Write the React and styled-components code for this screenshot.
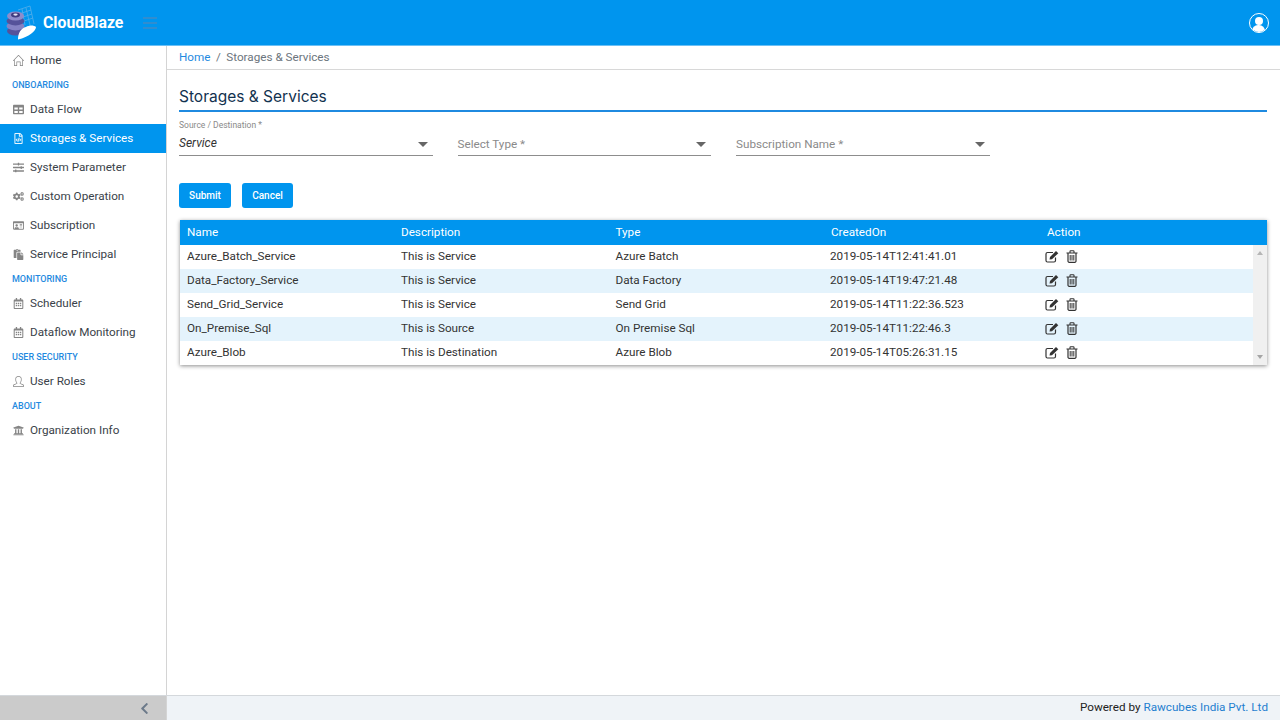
import React from 'react';
import styled, { createGlobalStyle } from 'styled-components';
import { FaTable, FaCogs, FaRegIdCard, FaPaste, FaRegCalendarAlt, FaUniversity, FaChevronLeft, FaRegFileCode, FaSlidersH } from 'react-icons/fa';
import { SlHome, SlUser } from 'react-icons/sl';

const Global = createGlobalStyle`
  html, body { margin: 0; padding: 0; height: 100%; background: #fff; }
  body { font-family: Roboto, "Liberation Sans", sans-serif; overflow: hidden; }
  * { box-sizing: border-box; }
`;

const Page = styled.div`width: 1280px; height: 720px; display: flex; flex-direction: column;`;
const Header = styled.header`
  height: 46px; flex: none; background: #0095ee; border-bottom: 1px solid #6cc0f5; display: flex; align-items: center; padding: 0 11px 0 0;
`;
const Brand = styled.div`
  font-family: Roboto, sans-serif; font-weight: 700; font-size: 15.8px; color: #fff; margin-left: 3px; width: 100px;
`;
const Burger = styled.div`
  width: 14px; height: 12px; display: flex; flex-direction: column; justify-content: space-between;
  span { display: block; height: 2px; background: #2f8dd0; }
`;
const Spacer = styled.div`flex: 1;`;
const Body = styled.div`flex: 1; display: flex; min-height: 0;`;
const Sidebar = styled.nav`
  width: 167px; flex: none; border-right: 1px solid #d4d4d4; background: #fff;
`;
const Item = styled.div`
  height: 29px; display: flex; align-items: center; padding: 0 0 1px 13px; font-size: 11.7px;
  background: ${p => (p.$active ? '#0095ee' : 'transparent')};
  color: ${p => (p.$active ? '#fff' : '#3a4249')};
  svg { width: 11px; height: 11px; color: ${p => (p.$active ? '#e6f4fd' : '#858585')}; flex: none; margin-right: 6px; }
`;
const Section = styled.div`
  height: 20px; display: flex; align-items: center; padding: 0 0 1px 12px; font-size: 9px; font-weight: 500; color: #1f8ae0;
`;
const Main = styled.main`flex: 1; display: flex; flex-direction: column; min-width: 0;`;
const Crumbs = styled.div`
  height: 24px; flex: none; border-bottom: 1px solid #d8d8d8; padding: 0 0 2px 12px; display: flex; align-items: center;
  font-size: 11.7px; color: #6c757d; gap: 5.5px;
  a { color: #1f8ae0; }
`;
const Content = styled.div`padding: 17px 13px 0 12px; flex: 1;`;
const Title = styled.h1`
  margin: 0; font-family: Inter, sans-serif; font-weight: 400; font-size: 15.5px; color: #12324f; height: 25px; line-height: 20px;
  border-bottom: 2px solid #1f8ae0;
`;
const FormRow = styled.div`display: flex; gap: 25px; margin-top: 7px;`;
const Field = styled.div`
  width: 253.5px; height: 37px; position: relative; border-bottom: 1px solid #8d8d8d; display: flex; align-items: flex-end; padding-bottom: 4px;
`;
const FloatLabel = styled.label`
  position: absolute; top: 1px; left: 0; font-size: 8.5px; color: #8a8a8a;
`;
const Value = styled.span`font-size: 12px; font-style: italic; color: #333; position: relative; top: -1.5px;`;
const Placeholder = styled.span`font-size: 11.7px; color: #8a8a8a;`;
const Caret = styled.i`
  position: absolute; right: 5px; bottom: 8px; width: 0; height: 0;
  border-left: 5px solid transparent; border-right: 5px solid transparent; border-top: 5px solid #666;
`;
const Buttons = styled.div`display: flex; gap: 11px; margin-top: 27px;`;
const Button = styled.button`
  width: ${p => p.$w}px; height: 25px; border: 0; border-radius: 3px; background: #0095ee; color: #fff;
  font-family: Roboto, sans-serif; font-size: 10px; font-weight: 500; padding: 0;
`;
const Table = styled.div`
  margin-top: 12px; margin-left: 1px; box-shadow: 0 1px 4px rgba(0,0,0,.45); position: relative;
`;
const cols = '214px 214.5px 215.5px 216px 1fr';
const HeadRow = styled.div`
  display: grid; grid-template-columns: ${cols}; height: 25px; padding: 0 0 1px 7px; background: #0095ee; color: #fff; font-size: 11.7px; align-items: center;
`;
const RowsWrap = styled.div`position: relative;`;
const Row = styled.div`
  display: grid; grid-template-columns: ${cols}; height: 24px; align-items: center; padding: 0 0 2px 7px; font-size: 11.7px; color: #333;
  background: ${p => (p.$alt ? '#e4f3fc' : '#fff')};
`;
const Cell = styled.div`margin-left: ${p => p.$shift || 0}px;`;
const Actions = styled.div`display: flex; gap: 7px; align-items: center; margin: 0 0 0 -2px; color: #333;`;
const Scrollbar = styled.div`
  position: absolute; right: 0; top: 0; bottom: 0; width: 14px; background: #f0f0f0;
  &::before, &::after { content: ''; position: absolute; left: 3.5px; border-left: 3.5px solid transparent; border-right: 3.5px solid transparent; }
  &::before { top: 6px; border-bottom: 4px solid #b5b5b5; }
  &::after { bottom: 6px; border-top: 4px solid #a5a5a5; }
`;
const Footer = styled.footer`height: 25px; flex: none; display: flex; border-top: 1px solid #d4d8dc;`;
const Collapse = styled.div`
  width: 167px; background: #cbcbcb; border-right: 1px solid #d4d4d4; display: flex; align-items: center; justify-content: flex-end; padding-right: 16px;
  color: #6c7a8a; svg { width: 11px; height: 13px; }
`;
const FootText = styled.div`
  flex: 1; background: #eff3f7; display: flex; align-items: center; justify-content: flex-end; padding: 0 12px 2px 0; font-size: 11.7px; color: #222;
  a { color: #1f7fd0; margin-left: 3px; }
`;
const Avatar = styled.div`
  width: 20px; height: 20px; border-radius: 50%; border: 1.5px solid #fff; position: relative; overflow: hidden;
  &::before { content: ''; position: absolute; left: 4.5px; top: 3px; width: 8px; height: 8px; border-radius: 50%; background: #fff; }
  &::after { content: ''; position: absolute; left: 2px; top: 11.5px; width: 13px; height: 9px; border-radius: 6px 6px 0 0; background: #fff; }
`;

const Logo = () => (
  <svg width="40" height="45" viewBox="0 0 40 45" aria-hidden="true">
    <g stroke="#56aeea" strokeWidth="0.8" fill="none">
      <path d="M18 10 L30 6 L34 24 M22 9 L25 25 M26 8 L30 25 M19 14 L31 10 M20 18 L32 14 M21 22 L33 18" />
    </g>
    <ellipse cx="15.5" cy="31" rx="8.5" ry="4.6" fill="#55529a" />
    <ellipse cx="15.5" cy="26" rx="9" ry="4.4" fill="#8582c4" />
    <ellipse cx="15.5" cy="21" rx="9" ry="4.4" fill="#55529a" />
    <ellipse cx="15.5" cy="16" rx="8.5" ry="4.6" fill="#8f8cca" />
    <ellipse cx="15.5" cy="15" rx="4.5" ry="2.4" fill="#3f3c80" />
    <ellipse cx="15.5" cy="14.6" rx="2.2" ry="1.1" fill="#e2e2f2" />
    <path d="M18 39.5 C18 33 21 28 26 27 C29 25 34 25 36 27 C36 31 29 37 18 39.5Z" fill="#fff" />
  </svg>
);

const EditIcon = () => (
  <svg width="14" height="13" viewBox="0 0 14 13" aria-hidden="true">
    <path d="M10.5 7.5V10.5A1.5 1.5 0 0 1 9 12H2.5A1.5 1.5 0 0 1 1 10.5V4A1.5 1.5 0 0 1 2.5 2.5H8" fill="none" stroke="#333" strokeWidth="1.2" />
    <path d="M4.5 9.5 L5 7 L11 1 L13.3 3.2 L7 9.2Z" fill="#333" />
  </svg>
);

const TrashIcon = () => (
  <svg width="12" height="13" viewBox="0 0 12 13" aria-hidden="true">
    <path d="M0.5 3H11.5M4 3V1.5A.7.7 0 0 1 4.7.8H7.3A.7.7 0 0 1 8 1.5V3" fill="none" stroke="#333" strokeWidth="1.1" />
    <path d="M2 3V11A1.2 1.2 0 0 0 3.2 12.3H8.8A1.2 1.2 0 0 0 10 11V3" fill="none" stroke="#333" strokeWidth="1.2" />
    <path d="M4.2 5V10.5M6 5V10.5M7.8 5V10.5" fill="none" stroke="#333" strokeWidth="1" />
  </svg>
);

const menu = [
  ['i', 'Home', <SlHome />], ['s', 'ONBOARDING'], ['i', 'Data Flow', <FaTable />],
  ['a', 'Storages & Services', <FaRegFileCode />], ['i', 'System Parameter', <FaSlidersH />],
  ['i', 'Custom Operation', <FaCogs />], ['i', 'Subscription', <FaRegIdCard />], ['i', 'Service Principal', <FaPaste />],
  ['s', 'MONITORING'], ['i', 'Scheduler', <FaRegCalendarAlt />], ['i', 'Dataflow Monitoring', <FaRegCalendarAlt />],
  ['s', 'USER SECURITY'], ['i', 'User Roles', <SlUser />], ['s', 'ABOUT'], ['i', 'Organization Info', <FaUniversity />],
];

const rows = [
  ['Azure_Batch_Service', 'This is Service', 'Azure Batch', '2019-05-14T12:41:41.01'],
  ['Data_Factory_Service', 'This is Service', 'Data Factory', '2019-05-14T19:47:21.48'],
  ['Send_Grid_Service', 'This is Service', 'Send Grid', '2019-05-14T11:22:36.523'],
  ['On_Premise_Sql', 'This is Source', 'On Premise Sql', '2019-05-14T11:22:46.3'],
  ['Azure_Blob', 'This is Destination', 'Azure Blob', '2019-05-14T05:26:31.15'],
];

export default function App() {
  return (
    <Page>
      <Global />
      <Header>
        <Logo />
        <Brand>CloudBlaze</Brand>
        <Burger><span /><span /><span /></Burger>
        <Spacer />
        <Avatar />
      </Header>
      <Body>
        <Sidebar>
          {menu.map(([k, label, icon]) =>
            k === 's' ? <Section key={label}>{label}</Section> : <Item key={label} $active={k === 'a'}>{icon}{label}</Item>
          )}
        </Sidebar>
        <Main>
          <Crumbs><a>Home</a><span>/</span><span>Storages &amp; Services</span></Crumbs>
          <Content>
            <Title>Storages &amp; Services</Title>
            <FormRow>
              <Field><FloatLabel>Source / Destination *</FloatLabel><Value>Service</Value><Caret /></Field>
              <Field><Placeholder>Select Type *</Placeholder><Caret /></Field>
              <Field><Placeholder>Subscription Name *</Placeholder><Caret /></Field>
            </FormRow>
            <Buttons><Button $w={52}>Submit</Button><Button $w={51}>Cancel</Button></Buttons>
            <Table>
              <HeadRow>
                <Cell>Name</Cell><Cell>Description</Cell><Cell>Type</Cell><Cell>CreatedOn</Cell><Cell>Action</Cell>
              </HeadRow>
              <RowsWrap>
                {rows.map((r, i) => (
                  <Row key={r[0]} $alt={i % 2 === 1}>
                    <Cell>{r[0]}</Cell><Cell>{r[1]}</Cell><Cell>{r[2]}</Cell><Cell $shift={-1}>{r[3]}</Cell>
                    <Actions><EditIcon /><TrashIcon /></Actions>
                  </Row>
                ))}
                <Scrollbar />
              </RowsWrap>
            </Table>
          </Content>
        </Main>
      </Body>
      <Footer>
        <Collapse><FaChevronLeft /></Collapse>
        <FootText>Powered by <a>Rawcubes India Pvt. Ltd</a></FootText>
      </Footer>
    </Page>
  );
}
